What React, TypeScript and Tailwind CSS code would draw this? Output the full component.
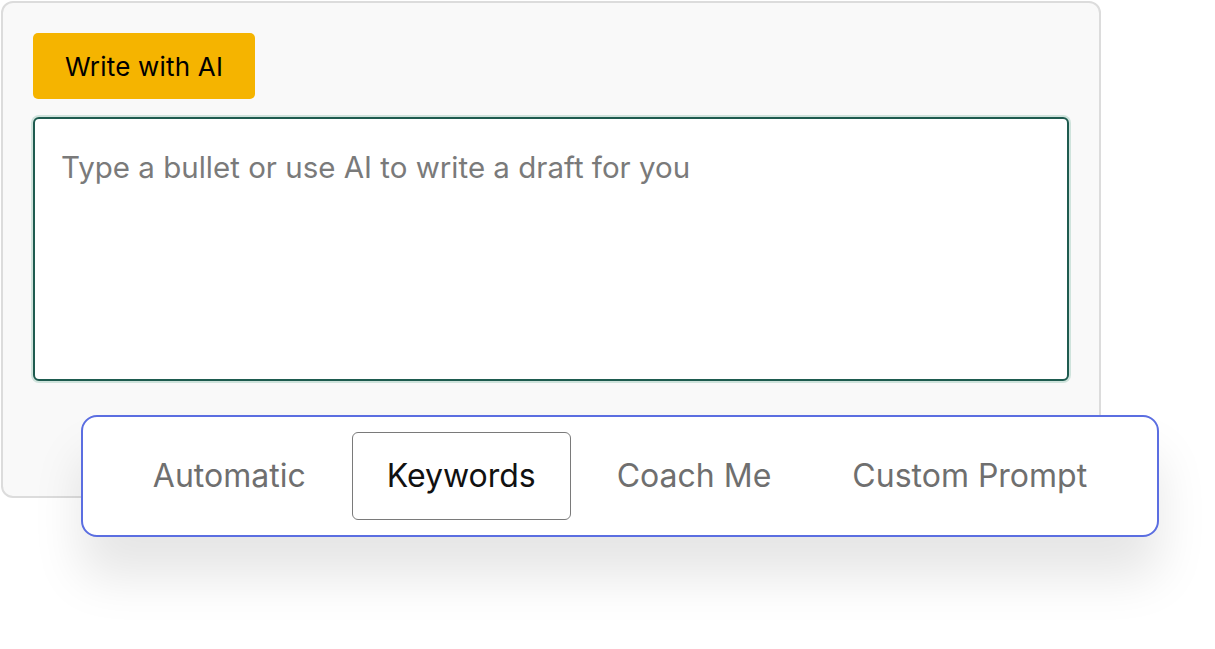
export default function App() {
    const tabs = ["Automatic", "Keywords", "Coach Me", "Custom Prompt"];
    const active = "Keywords";

    return (
        <div className="w-[1215px] h-[649px] bg-white pt-px pl-px font-['Inter',sans-serif] overflow-hidden">
            <div className="w-[1100px] h-[497px] rounded-[12px] border-2 border-[#dcdcdc] bg-[#f9f9f9] px-[30px] pt-[30px]">
                <button className="h-[66px] w-[222px] rounded-[5px] bg-[#f5b400] text-[26px] tracking-[0.2px] text-black flex items-center justify-center">
                    Write with AI
                </button>
                <div className="mt-[18px] h-[264px] rounded-[6px] border-2 border-[#1e5b4f] ring-2 ring-[#cfe3dc] bg-white px-[26px] pt-[28px]">
                    <p className="text-[29.5px] leading-[40px] text-[#7a7a7a]">Type a bullet or use AI to write a draft for you</p>
                </div>
            </div>

            <div className="relative -mt-[83px] ml-[80px] w-[1078px] h-[122px] rounded-[16px] border-2 border-[#5b6ee1] bg-white shadow-[0_40px_50px_rgba(0,0,0,0.10)] flex items-center justify-center gap-[11px]">
                {tabs.map((tab) => (
                    <div
                        key={tab}
                        className={
                            tab === active
                                ? "h-[88px] px-[34px] rounded-[6px] border border-[#7a7a7a] flex items-center text-[32px] text-[#111]"
                                : "h-[88px] px-[35px] flex items-center text-[32px] text-[#6f6f6f]"
                        }
                    >
                        {tab}
                    </div>
                ))}
            </div>
        </div>
    );
}
